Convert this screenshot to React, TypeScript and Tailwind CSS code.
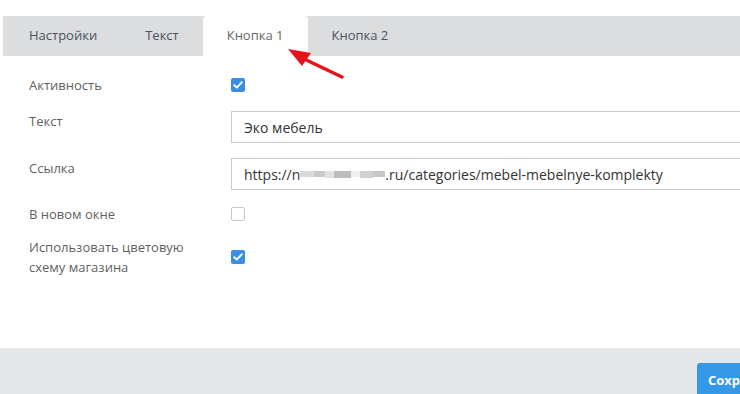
import React from "react";

const tabs = ["Настройки", "Текст", "Кнопка 1", "Кнопка 2"];

function Check({ on }: { on: boolean }) {
  if (!on) {
    return <span className="block h-[14px] w-[14px] shrink-0 rounded-[2px] border border-[#c8c8c8] bg-white" />;
  }
  return (
    <span className="flex h-[14px] w-[14px] shrink-0 items-center justify-center rounded-[2px] bg-[#3a8ee6]">
      <svg width="10" height="8" viewBox="0 0 10 8">
        <path d="M1.3 4.2 L3.8 6.6 L8.7 1.4" fill="none" stroke="#fff" strokeWidth="2" strokeLinecap="round" strokeLinejoin="round" />
      </svg>
    </span>
  );
}

export default function App() {
  return (
    <div className="relative h-[394px] w-[740px] overflow-hidden bg-white font-['Open_Sans',sans-serif] text-[13px]">
      {/* Tabs */}
      <div className="ml-[3px] mt-4 flex h-10 bg-[#dcdddf] pl-[2px]">
        {tabs.map((t, i) => (
          <div
            key={t}
            className={
              i === 2
                ? "flex items-center rounded-t-[4px] bg-white px-6 text-[#666]"
                : "flex items-center px-6 text-[#4a5362]"
            }
          >
            {t}
          </div>
        ))}
      </div>

      {/* Form */}
      <div className="flex h-[292px] flex-col pl-[29px] text-[#5f5f5f]">
        <div className="mt-[19px] flex h-5 items-center">
          <div className="w-[202px] shrink-0 leading-5">Активность</div>
          <Check on />
        </div>

        <div className="mt-4 flex items-start">
          <div className="w-[202px] shrink-0 leading-5">Текст</div>
          <div className="flex h-8 w-[600px] shrink-0 items-center border border-[#cbcbcb] pl-3 text-[14px] text-[#333]">
            Эко мебель
          </div>
        </div>

        <div className="mt-[15px] flex items-start">
          <div className="w-[202px] shrink-0 leading-5">Ссылка</div>
          <div className="flex h-8 w-[600px] shrink-0 items-center whitespace-nowrap border border-[#cbcbcb] pl-3 text-[14px] text-[#333]">
            https://n
            <span className="flex items-center">
              <span className="h-[6px] w-[14px] bg-[#d9d9d9]" />
              <span className="h-[6px] w-[11px] bg-[#c9c9c9]" />
              <span className="h-[7px] w-[9px] bg-[#e3e3e3]" />
              <span className="h-[7px] w-[17px] bg-[#bdbdbd]" />
              <span className="h-[6px] w-[9px] bg-[#f0f0f0]" />
              <span className="h-[7px] w-[13px] bg-[#d0d0d0]" />
              <span className="h-[6px] w-[12px] bg-[#c6c6c6]" />
            </span>
            .ru/categories/mebel-mebelnye-komplekty
          </div>
        </div>

        <div className="mt-[14px] flex h-5 items-center">
          <div className="w-[202px] shrink-0 leading-5">В новом окне</div>
          <Check on={false} />
        </div>

        <div className="mt-[13px] flex items-center">
          <div className="w-[202px] shrink-0 leading-5">
            Использовать цветовую
            <br />
            схему магазина
          </div>
          <Check on />
        </div>
      </div>

      {/* Footer */}
      <div className="flex h-[46px] bg-[#e5e6e8] pl-[697px] pt-[15px]">
        <button className="h-9 shrink-0 whitespace-nowrap rounded-[3px] bg-[#3498e8] px-[11px] text-[13px] font-bold text-white">
          Сохранить
        </button>
      </div>

      {/* Annotation arrow */}
      <svg className="absolute left-0 top-0" width="740" height="394">
        <line x1="342" y1="77" x2="300" y2="57" stroke="#e8131a" strokeWidth="3.5" strokeLinecap="round" />
        <polygon points="288,49 311,53 302,66" fill="#e8131a" />
      </svg>
    </div>
  );
}
